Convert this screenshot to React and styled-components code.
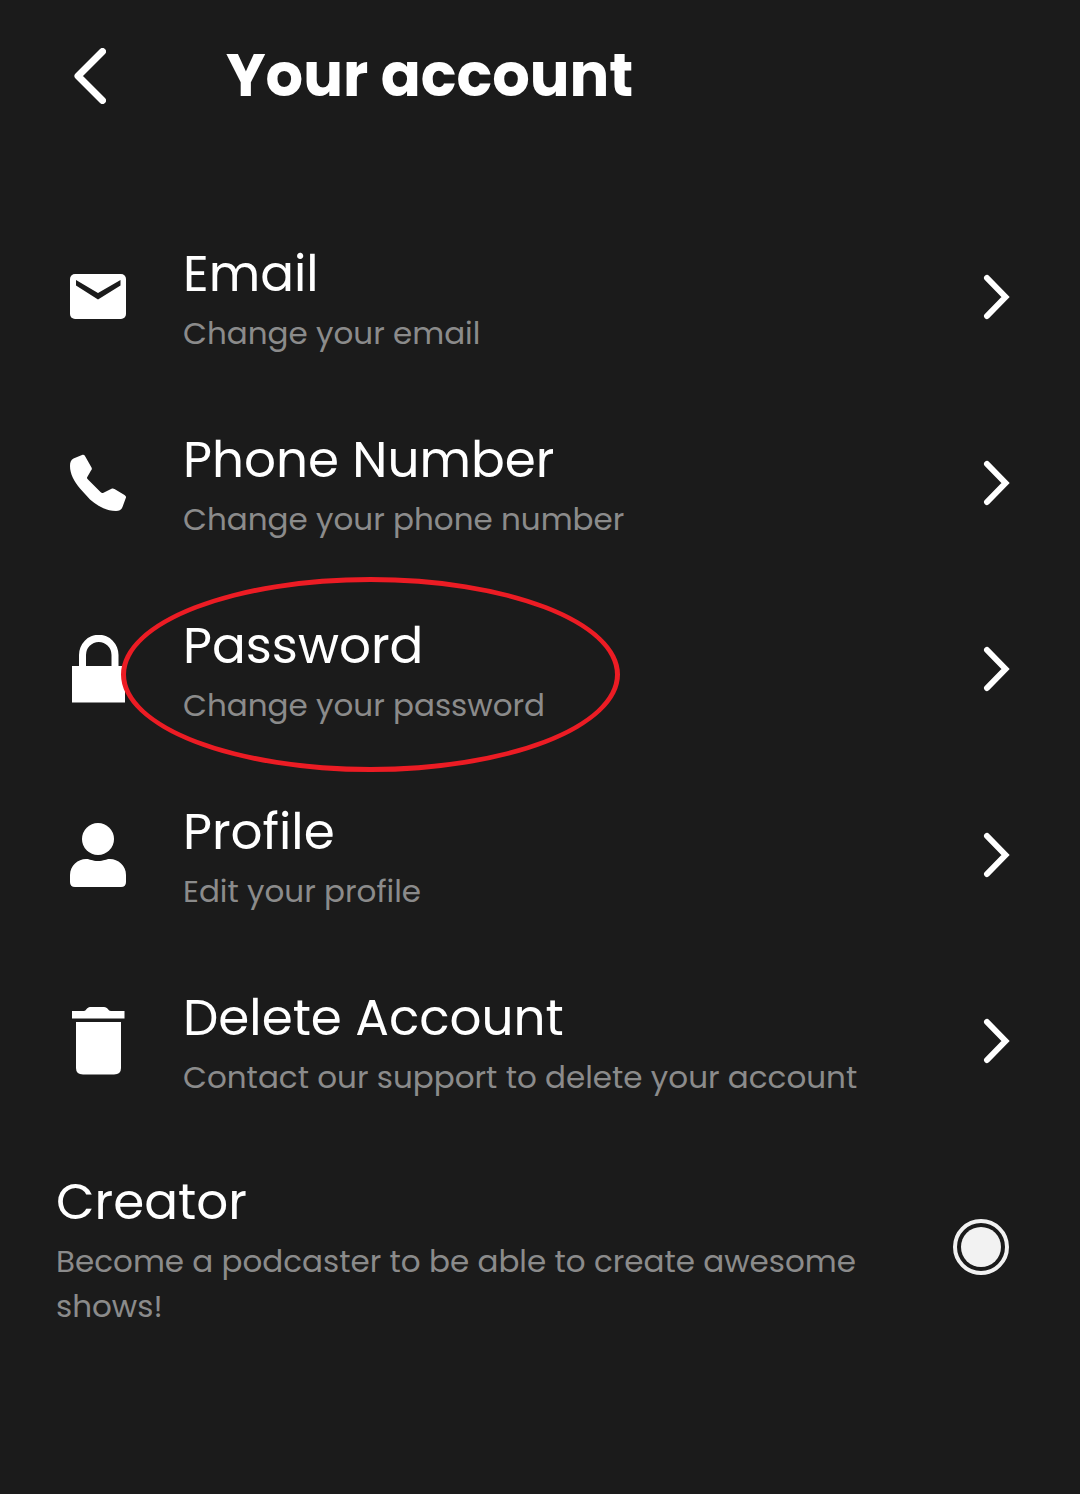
import styled, { createGlobalStyle } from "styled-components";

const GlobalStyle = createGlobalStyle`
  body {
    margin: 0;
    background: #1b1b1b;
    color: #ffffff;
    font-family: Poppins, Inter, "Open Sans", sans-serif;
  }
`;

const Page = styled.main`
  min-height: 100vh;
  box-sizing: border-box;
  background: #1b1b1b;
`;

const Header = styled.header`
  display: flex;
  align-items: center;
  gap: 120px;
  padding: 36px 56px 0 74px;
`;

const BackButton = styled.button`
  display: flex;
  padding: 0;
  border: none;
  background: none;
  color: inherit;
  cursor: pointer;
`;

const Heading = styled.h1`
  margin: 0;
  font-size: 59px;
  line-height: 80px;
  font-weight: 700;
`;

const List = styled.ul`
  list-style: none;
  margin: 0;
  padding: 88px 0 0;
`;

const Item = styled.li`
  position: relative;
`;

const RowButton = styled.button`
  display: flex;
  align-items: center;
  width: 100%;
  padding: 33px 70px 34px;
  border: none;
  background: none;
  color: inherit;
  font: inherit;
  text-align: left;
  cursor: pointer;
`;

const IconSlot = styled.span`
  display: flex;
  flex: none;
  width: 113px;
`;

const Texts = styled.span`
  display: flex;
  flex: 1;
  flex-direction: column;
`;

const Title = styled.span`
  font-size: 50px;
  line-height: 74px;
`;

const Description = styled.span`
  color: #8b8b8b;
  font-size: 31px;
  line-height: 45px;
`;

const Marker = styled.span`
  position: absolute;
  top: 1px;
  left: 121px;
  box-sizing: border-box;
  width: 499px;
  height: 195px;
  border: 5px solid #ec1c24;
  border-radius: 50%;
  pointer-events: none;
`;

const CreatorRow = styled.label`
  display: flex;
  align-items: center;
  gap: 64px;
  padding: 31px 71px 33px 56px;
  cursor: pointer;
`;

const Radio = styled.input`
  appearance: none;
  flex: none;
  box-sizing: border-box;
  width: 56px;
  height: 56px;
  margin: 0;
  padding: 4px;
  border: 4px solid #f2f2f2;
  border-radius: 50%;
  background: #f2f2f2 content-box;
`;

const Svg = styled.svg`
  display: block;
  flex: none;
`;

const BackIcon = () => (
  <Svg width="32" height="56" viewBox="0 0 32 56" fill="none" aria-hidden="true">
    <path
      d="M28.500 3.500L4 28L28.500 52.500"
      stroke="currentColor"
      strokeWidth="7"
      strokeLinecap="round"
      strokeLinejoin="round"
    />
  </Svg>
);

const ChevronIcon = () => (
  <Svg width="27" height="46" viewBox="0 0 27 46" fill="none" aria-hidden="true">
    <path
      d="M4 4L22.500 23L4 42"
      stroke="currentColor"
      strokeWidth="6"
      strokeLinecap="round"
      strokeLinejoin="miter"
    />
  </Svg>
);

const MailIcon = () => (
  <Svg width="56" height="46" viewBox="0 0 56 46" fill="currentColor" aria-hidden="true">
    <rect width="56" height="45" rx="5" />
    <path d="M6 6L28 19L50.500 6V11.500L28 25.500L6 11.500Z" fill="#1b1b1b" />
  </Svg>
);

const PhoneIcon = () => (
  <Svg width="56" height="57" viewBox="0 0 56 57" fill="currentColor" aria-hidden="true">
    <path d="M12 1C13 .4 14 .5 14.700 1.500L21.500 13.500C22 14.500 22 15.500 21 16.500L17 23.500C17 24.500 17.500 25 18 25.500L30.500 38C31.500 39 32.500 39.200 33.500 38.700L41.500 34.700C42.500 34.200 43.500 34.300 44.500 34.900L54.500 41C56 42 56.300 43 55.800 44L52.500 53C51.500 55.800 49.500 57 46 57C36 57 27 51.500 20 45.500L10 34.500C4 27 0 20 0 12C0 8.500 .8 6 3.500 4.500Z" />
  </Svg>
);

const LockIcon = () => (
  <Svg width="56" height="68" viewBox="0 0 56 68" fill="currentColor" aria-hidden="true">
    <path d="M2 31H9V20A19.500 20 0 0 1 48.500 20V31H55V67.500H2ZM16 31H41.500V20A12.700 13 0 0 0 16 20Z" />
  </Svg>
);

const PersonIcon = () => (
  <Svg width="56" height="64" viewBox="0 0 56 64" fill="currentColor" aria-hidden="true">
    <circle cx="28" cy="16" r="16" />
    <path d="M0 52C0 42.500 8 36 16 36C20 36 22 38 28 38C34 38 36 36 40 36C48 36 56 42.500 56 52V59Q56 64 51 64H5Q0 64 0 59Z" />
  </Svg>
);

const TrashIcon = () => (
  <Svg width="56" height="68" viewBox="0 0 56 68" fill="currentColor" aria-hidden="true">
    <path d="M2 4H14C16 4 17 0 20 0H34C38 0 38 4 41 4H54.500V11.500H2Z" />
    <path d="M6 15H51V61Q51 67.500 44 67.500H13Q6 67.500 6 61Z" />
  </Svg>
);

const settings = [
  { title: "Email", description: "Change your email", Icon: MailIcon },
  { title: "Phone Number", description: "Change your phone number", Icon: PhoneIcon },
  { title: "Password", description: "Change your password", Icon: LockIcon, marked: true },
  { title: "Profile", description: "Edit your profile", Icon: PersonIcon },
  {
    title: "Delete Account",
    description: "Contact our support to delete your account",
    Icon: TrashIcon,
  },
];

export default function App() {
  return (
    <Page>
      <GlobalStyle />
      <Header>
        <BackButton type="button" aria-label="Back">
          <BackIcon />
        </BackButton>
        <Heading>Your account</Heading>
      </Header>
      <List>
        {settings.map(({ title, description, Icon, marked }) => (
          <Item key={title}>
            <RowButton type="button">
              <IconSlot>
                <Icon />
              </IconSlot>
              <Texts>
                <Title>{title}</Title>
                <Description>{description}</Description>
              </Texts>
              <ChevronIcon />
            </RowButton>
            {marked && <Marker />}
          </Item>
        ))}
      </List>
      <CreatorRow>
        <Texts>
          <Title>Creator</Title>
          <Description>
            Become a podcaster to be able to create awesome shows!
          </Description>
        </Texts>
        <Radio type="radio" name="creator" />
      </CreatorRow>
    </Page>
  );
}
